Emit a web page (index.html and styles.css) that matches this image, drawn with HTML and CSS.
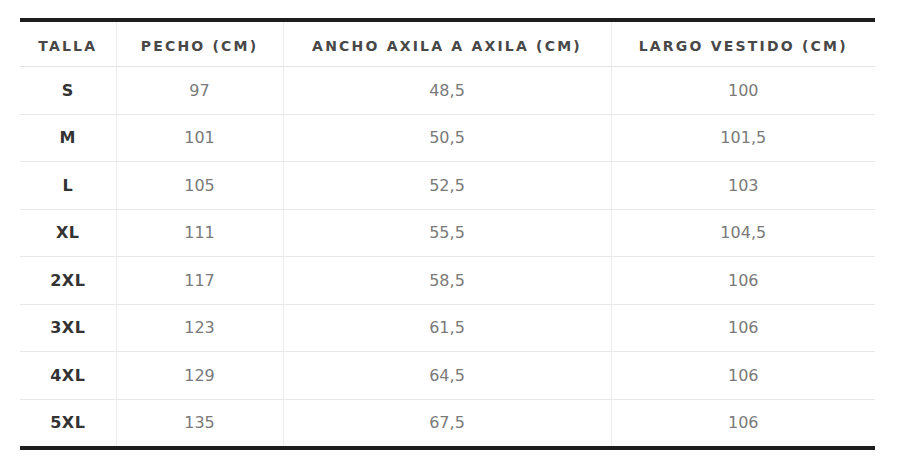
FILE: index.html
```html
<!DOCTYPE html>
<html lang="es">
<head>
<meta charset="utf-8">
<title>Tabla de tallas</title>
<link rel="stylesheet" href="styles.css">
</head>
<body>
<div class="wrap">
<table class="sizes">
  <colgroup>
    <col class="c1"><col class="c2"><col class="c3"><col class="c4">
  </colgroup>
  <thead>
    <tr><th>Talla</th><th>Pecho (cm)</th><th>Ancho axila a axila (cm)</th><th>Largo vestido (cm)</th></tr>
  </thead>
  <tbody>
    <tr><td>S</td><td>97</td><td>48,5</td><td>100</td></tr>
    <tr><td>M</td><td>101</td><td>50,5</td><td>101,5</td></tr>
    <tr><td>L</td><td>105</td><td>52,5</td><td>103</td></tr>
    <tr><td>XL</td><td>111</td><td>55,5</td><td>104,5</td></tr>
    <tr><td>2XL</td><td>117</td><td>58,5</td><td>106</td></tr>
    <tr><td>3XL</td><td>123</td><td>61,5</td><td>106</td></tr>
    <tr><td>4XL</td><td>129</td><td>64,5</td><td>106</td></tr>
    <tr><td>5XL</td><td>135</td><td>67,5</td><td>106</td></tr>
  </tbody>
</table>
</div>
</body>
</html>
```
FILE: styles.css
```css
html, body {
  margin: 0;
  padding: 0;
  background: #ffffff;
}
.wrap {
  padding: 18px 25px 0 20px;
}
.sizes {
  width: 855px;
  border-collapse: collapse;
  border-top: 4px solid #1e1e1e;
  border-bottom: 4px solid #1e1e1e;
  font-family: "DejaVu Sans", "Open Sans", sans-serif;
  table-layout: fixed;
}
.c1 { width: 96px; }
.c2 { width: 167px; }
.c3 { width: 328px; }
.c4 { width: 264px; }
.sizes th, .sizes td {
  text-align: center;
  padding: 0;
  border-left: 1px solid #ededed;
}
.sizes th:first-child, .sizes td:first-child {
  border-left: none;
}
.sizes th {
  height: 41px;
  padding-top: 3px;
  font-size: 14px;
  font-weight: 700;
  letter-spacing: 2.2px;
  text-transform: uppercase;
  color: #484848;
  border-bottom: 1px solid #e3e3e3;
}
.sizes td {
  height: 46.5px;
  font-size: 16px;
  font-weight: 400;
  color: #7a7a7a;
  border-bottom: 1px solid #e8e8e8;
}
.sizes td:first-child {
  font-weight: 700;
  color: #333333;
  letter-spacing: 0.5px;
}
```
